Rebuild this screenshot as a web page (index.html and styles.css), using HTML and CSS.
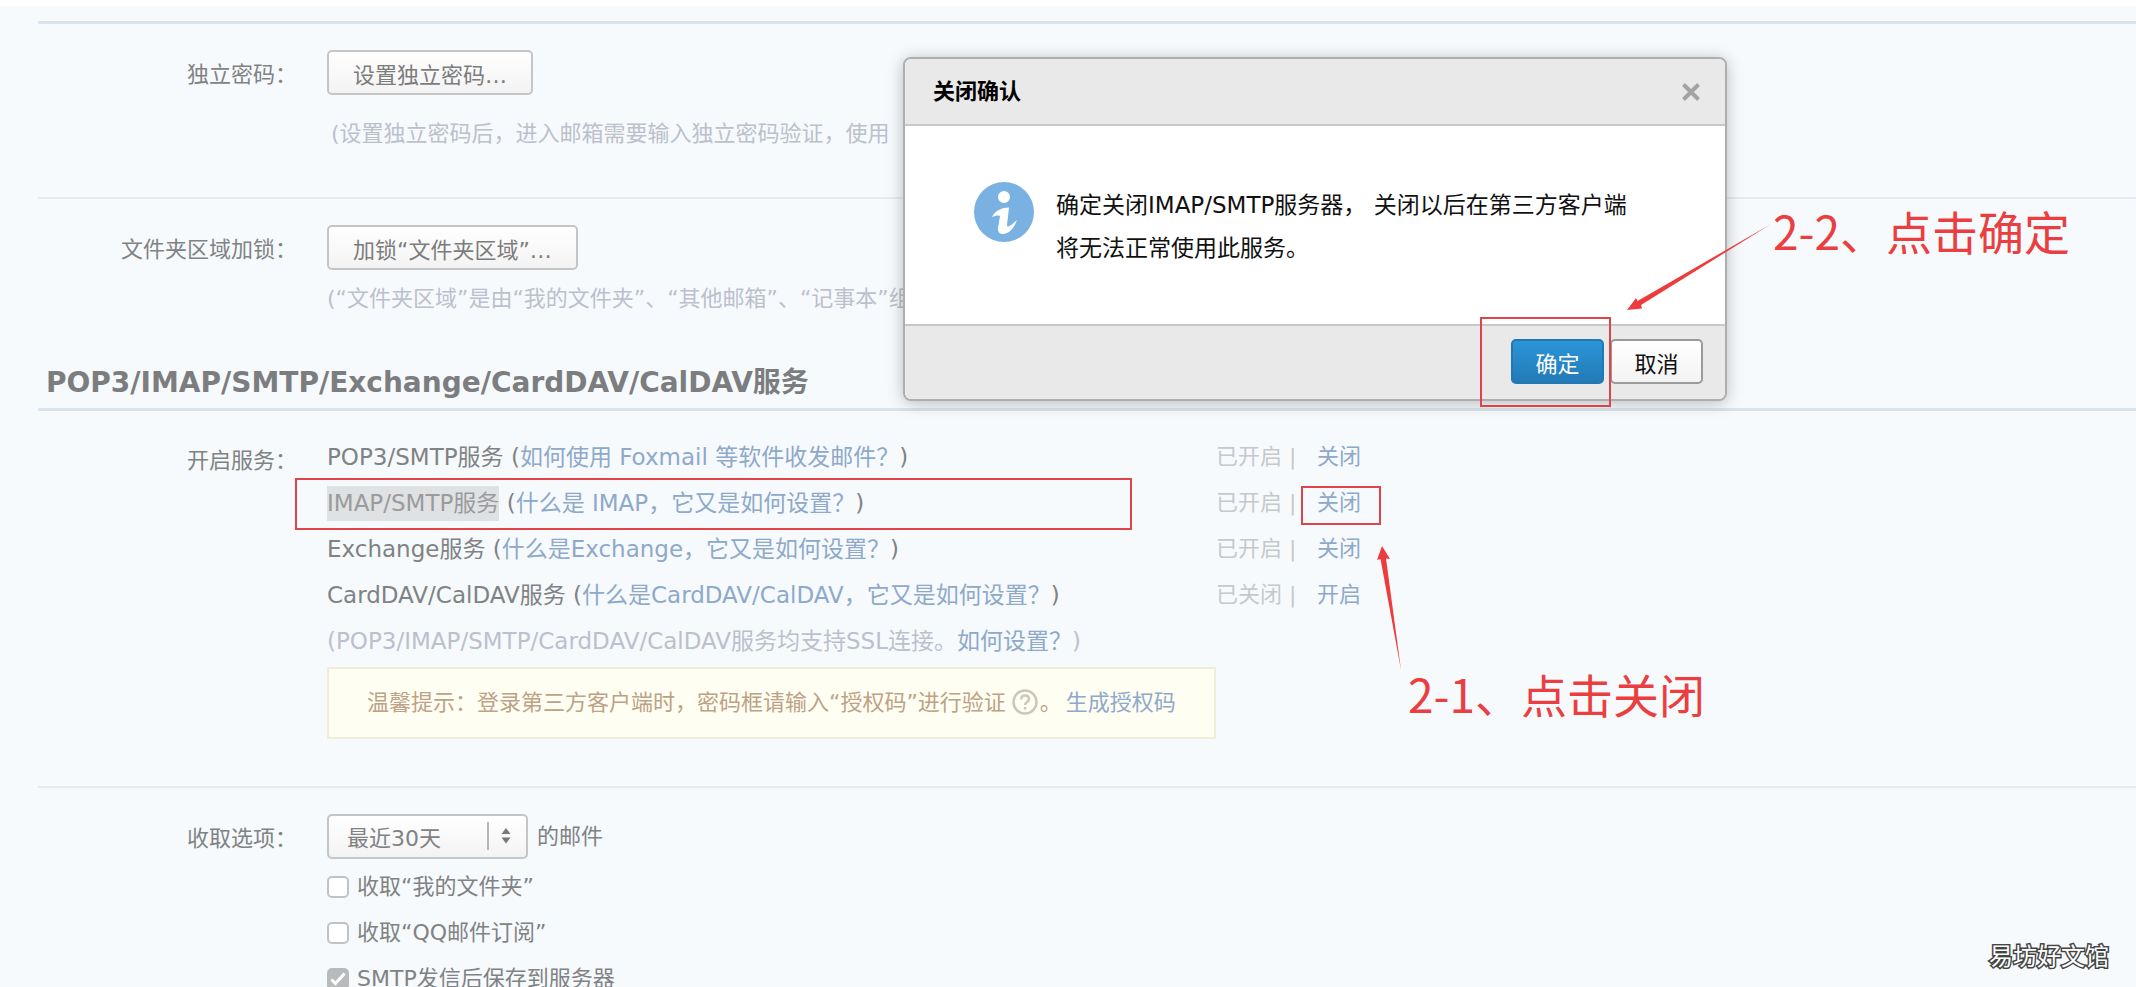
FILE: index.html
```html
<!DOCTYPE html>
<html lang="zh-CN">
<head>
<meta charset="utf-8">
<title>邮箱设置</title>
<link rel="stylesheet" href="styles.css">
</head>
<body>
<main class="settings">
  <section class="group">
    <div class="row">
      <div class="label">独立密码：</div>
      <div class="field">
        <button class="btn" type="button">设置独立密码…</button>
        <p class="hint hint-first">(设置独立密码后，进入邮箱需要输入独立密码验证，使用</p>
      </div>
    </div>
    <div class="row row-lock">
      <div class="label">文件夹区域加锁：</div>
      <div class="field">
        <button class="btn" type="button">加锁“文件夹区域”…</button>
        <p class="hint">(“文件夹区域”是由“我的文件夹”、“其他邮箱”、“记事本”组</p>
      </div>
    </div>
  </section>

  <h2 class="title">POP3/IMAP/SMTP/Exchange/CardDAV/CalDAV服务</h2>
  <section class="group">
    <div class="row row-services">
      <div class="label label-services">开启服务：</div>
      <div class="field">
        <ul class="services">
          <li><span class="name">POP3/SMTP服务 (<a href="#">如何使用 Foxmail 等软件收发邮件？</a>)</span><span class="state">已开启 |</span><a href="#">关闭</a></li>
          <li><span class="name"><mark>IMAP/SMTP服务</mark> (<a href="#">什么是 IMAP，它又是如何设置？</a>)</span><span class="state">已开启 |</span><a href="#">关闭</a></li>
          <li><span class="name">Exchange服务 (<a href="#">什么是Exchange，它又是如何设置？</a>)</span><span class="state">已开启 |</span><a href="#">关闭</a></li>
          <li><span class="name">CardDAV/CalDAV服务 (<a href="#">什么是CardDAV/CalDAV，它又是如何设置？</a>)</span><span class="state">已关闭 |</span><a href="#">开启</a></li>
        </ul>
        <p class="ssl">(POP3/IMAP/SMTP/CardDAV/CalDAV服务均支持SSL连接。<a href="#">如何设置？</a>)</p>
        <p class="tip">温馨提示：登录第三方客户端时，密码框请输入“授权码”进行验证<svg class="help" viewBox="0 0 26 26" aria-hidden="true"><circle cx="13" cy="13" r="11.5"/><path d="M9.2 10.4c0-2.4 1.600-3.900 3.900-3.900s3.900 1.400 3.900 3.500c0 3-3.900 3-3.900 6M13.100 18v2.500"/></svg>。<a href="#">生成授权码</a></p>
      </div>
    </div>
    <div class="row row-receive">
      <label class="label" for="range">收取选项：</label>
      <div class="field">
        <div class="range">
          <span class="select">
            <select id="range"><option>最近30天</option></select>
            <svg viewBox="0 0 24 28" aria-hidden="true"><path class="rule" d="M1 0v28"/><path d="M14.500 12l4.500-6 4.500 6zM14.500 15.500l4.500 6 4.500-6z"/></svg>
          </span>
          <span>的邮件</span>
        </div>
        <label class="check"><input type="checkbox"><span>收取“我的文件夹”</span></label>
        <label class="check"><input type="checkbox"><span>收取“QQ邮件订阅”</span></label>
        <label class="check"><input type="checkbox" checked><span>SMTP发信后保存到服务器</span></label>
      </div>
    </div>
  </section>
</main>

<div class="dialog" role="dialog" aria-labelledby="dialog-title">
  <header class="dialog-head">
    <h3 id="dialog-title">关闭确认</h3>
    <button class="close" type="button" aria-label="关闭"><svg viewBox="0 0 20 20"><path d="M2.500 2.500l15 15M17.500 2.500l-15 15"/></svg></button>
  </header>
  <div class="dialog-body">
    <svg class="info" viewBox="0 0 60 60" aria-hidden="true"><circle cx="30" cy="30" r="30"/><path d="M30 9a6 6 0 1 1 0 12 6 6 0 0 1 0-12zM18 35c3-6 8-9 17-9.500L33 43c0 3 3 1.500 10-5-3 9-9 14-14 14-4 0-5.500-3-5-6l2-12c-2-1-5 0-8 1z"/></svg>
    <p>确定关闭IMAP/SMTP服务器， 关闭以后在第三方客户端<br>将无法正常使用此服务。</p>
  </div>
  <footer class="dialog-foot">
    <button class="btn primary" type="button">确定</button>
    <button class="btn" type="button">取消</button>
  </footer>
</div>

<div class="notes">
  <div class="frame frame-service"></div>
  <div class="frame frame-off"></div>
  <div class="frame frame-confirm"></div>
  <svg class="arrow arrow-off" viewBox="0 0 26 126" aria-hidden="true"><path d="M6 1L1 15l3.500-1L25 125 10 13.500l4 .5z"/></svg>
  <svg class="arrow arrow-confirm" viewBox="0 0 146 88" aria-hidden="true"><path d="M1 87L10 75l1.500 3L145 1 15 82l1 3.500z"/></svg>
  <p class="note note-off">2-1、点击关闭</p>
  <p class="note note-confirm">2-2、点击确定</p>
  <p class="watermark">易坊好文馆</p>
</div>
</body>
</html>
```
FILE: styles.css
```css
* { box-sizing: border-box; }

body {
  position: relative;
  height: 100vh;
  margin: 0;
  overflow: hidden;
  border-top: 6px solid #fff;
  background: #f6fafd;
  color: #808284;
  font: 22px/46px "DejaVu Sans", "Noto Sans CJK SC", sans-serif;
}

p, h2, h3, ul { margin: 0; padding: 0; font-size: inherit; }
a { color: #8ea9c9; text-decoration: none; }

.settings { padding: 15px 0 0 38px; white-space: nowrap; }
.group { border-top: 3px solid #d9e4ee; }

.row {
  display: grid;
  grid-template-columns: 259px 1fr;
  column-gap: 30px;
  padding: 26px 0 40px;
}
.row + .row { border-top: 2px solid #e6ebf0; }
.row-lock { padding-bottom: 37px; }
.row-services { padding: 23px 0 47px; }
.row-receive { padding: 26px 0 0; }
.label { padding-top: 2px; text-align: right; }
.label-services { padding-top: 4px; }

.btn {
  display: block;
  height: 45px;
  padding: 6px 24px 0;
  border: 2px solid #c4c5c6;
  border-radius: 5px;
  background: linear-gradient(#fff, #f3f3f3);
  color: #7c7c7c;
  font: inherit;
  line-height: 35px;
}
.hint { margin-top: 6px; color: #bcc0cc; }
.hint-first { margin-top: 16px; padding-left: 4px; }

.title {
  padding: 1px 8px 2px;
  color: #7c7d7f;
  font-size: 28px;
  font-weight: bold;
}

.services { list-style: none; }
.services li {
  display: grid;
  grid-template-columns: 889px 101px auto;
  justify-content: start;
}
.services .name, .ssl { font-size: 23px; }
.services mark {
  padding: 4px 0 5px;
  background: #dfe1e3;
  color: #999b9d;
}
.state { color: #c6c9cc; }
.ssl { color: #bcc0cc; }
.tip {
  width: fit-content;
  margin-top: 3px;
  padding: 11px 38px;
  border: 2px solid #f1eed6;
  background: #fffef2;
  color: #bda286;
}
.tip a { margin-left: 4px; }
.help {
  width: 26px;
  height: 26px;
  margin: 0 2px 0 6px;
  vertical-align: -5px;
  fill: none;
  stroke: #cbc8ba;
  stroke-width: 2.500;
}

.range { display: flex; align-items: center; gap: 9px; height: 45px; margin-bottom: 5px; }
.select { position: relative; display: flex; }
.select select {
  width: 201px;
  height: 45px;
  padding: 4px 48px 0 18px;
  appearance: none;
  border: 2px solid #c4c5c6;
  border-radius: 5px;
  background: linear-gradient(#fff, #f3f3f3);
  color: #808284;
  font: inherit;
  line-height: 36px;
}
.select svg {
  position: absolute;
  top: 8px;
  right: 17px;
  width: 24px;
  height: 28px;
  fill: #77797b;
  pointer-events: none;
}
.select .rule { stroke: #b5b7b9; stroke-width: 2; }

.check { display: flex; align-items: center; gap: 8px; }
.check input {
  width: 22px;
  height: 22px;
  margin: 0;
  appearance: none;
  border: 2px solid #c0c2c4;
  border-radius: 5px;
  background: #fff;
}
.check input:checked {
  border-color: #b9babb;
  background: #b9babb url("data:image/svg+xml,%3Csvg xmlns='http://www.w3.org/2000/svg' viewBox='0 0 18 18'%3E%3Cpath d='M2.500 9.500l4 4L15.500 3.500' fill='none' stroke='white' stroke-width='3'/%3E%3C/svg%3E");
}

.dialog {
  position: absolute;
  top: 51px;
  left: 903px;
  width: 824px;
  border: 2px solid #adaeaf;
  border-radius: 8px;
  background: #fff;
  box-shadow: 0 2px 16px rgba(0, 0, 0, .25);
  color: #111;
  overflow: hidden;
}
.dialog-head {
  display: flex;
  align-items: center;
  justify-content: space-between;
  padding: 10px 24px 9px 28px;
  border-bottom: 2px solid #c8c8c8;
  background: #e9e9e9;
}
.dialog-head h3 { color: #000; font-weight: bold; }
.close { width: 20px; height: 20px; padding: 0; border: 0; background: none; }
.close svg { display: block; stroke: #a3a3a3; stroke-width: 4; }
.dialog-body { display: flex; gap: 22px; padding: 56px 60px 54px 69px; }
.dialog-body p { padding-top: 2px; font-size: 23px; line-height: 43px; white-space: nowrap; }
.info { flex: none; width: 60px; height: 60px; fill: #79b2e2; }
.info path { fill: #fff; }
.dialog-foot {
  display: flex;
  justify-content: flex-end;
  gap: 6px;
  padding: 13px 22px 15px;
  border-top: 2px solid #c8c8c8;
  background: #e9e9e9;
}
.dialog-foot .btn {
  width: 93px;
  padding: 6px 0 0;
  border-color: #9a9a9a;
  color: #111;
}
.dialog-foot .primary {
  border-color: #2277b5;
  background: linear-gradient(#2b95d9, #237ab6);
  color: #fff;
}

/* Hand-placed markup drawn on top of the page */
.frame, .arrow, .note, .watermark { position: absolute; pointer-events: none; }
.frame { border: 2px solid #e04449; }
.frame-service { top: 472px; left: 295px; width: 837px; height: 52px; }
.frame-off { top: 480px; left: 1301px; width: 80px; height: 39px; }
.frame-confirm { top: 311px; left: 1480px; width: 131px; height: 90px; }
.arrow { fill: #ef3b3c; }
.arrow-off { top: 539px; left: 1376px; width: 26px; height: 126px; }
.arrow-confirm { top: 217px; left: 1626px; width: 146px; height: 88px; }
.note {
  color: #ea3e40;
  font: 46px/60px "Noto Sans CJK SC", sans-serif;
  white-space: nowrap;
}
.note-off { top: 657px; left: 1408px; }
.note-confirm { top: 194px; left: 1773px; }
.watermark {
  right: 27px;
  bottom: 14px;
  color: #fff;
  font: 24px/36px "Noto Sans CJK SC", sans-serif;
  -webkit-text-stroke: 3px #444;
  paint-order: stroke fill;
}
```
